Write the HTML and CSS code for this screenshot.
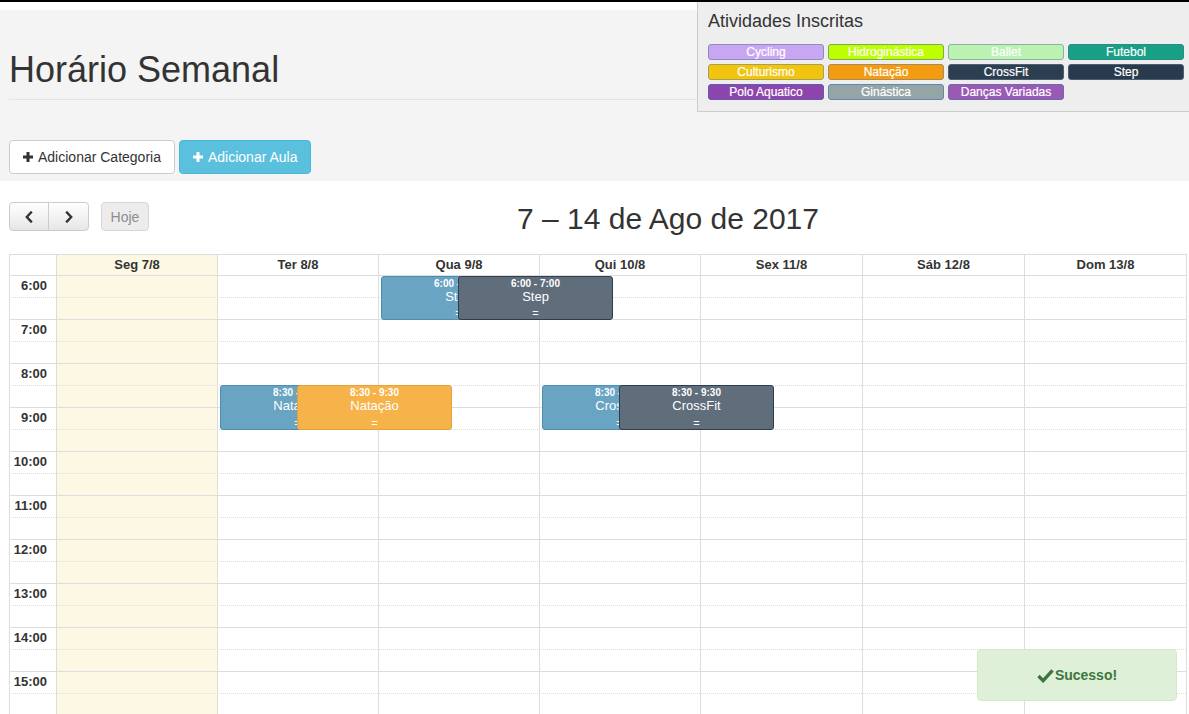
FILE: index.html
```html
<!DOCTYPE html>
<html lang="pt">
<head>
<meta charset="utf-8">
<title>Horário Semanal</title>
<link rel="stylesheet" href="styles.css">
</head>
<body>
<header class="hero">
  <div class="page-header"><h1>Horário Semanal</h1></div>
  <div class="actions">
    <button class="btn btn-default"><svg class="plus" viewBox="0 0 10 10"><rect x="3.5" y="0" width="3" height="10"/><rect x="0" y="3.5" width="10" height="3"/></svg> Adicionar Categoria</button>
    <button class="btn btn-info"><svg class="plus" viewBox="0 0 10 10"><rect x="3.5" y="0" width="3" height="10"/><rect x="0" y="3.5" width="10" height="3"/></svg> Adicionar Aula</button>
  </div>
</header>

<aside class="activities">
  <h4 class="act-title">Atividades Inscritas</h4>
  <div class="labels">
    <span class="lbl c-cycling">Cycling</span>
    <span class="lbl c-hidro">Hidroginástica</span>
    <span class="lbl c-ballet">Ballet</span>
    <span class="lbl c-futebol">Futebol</span>
    <span class="lbl c-cult">Culturismo</span>
    <span class="lbl c-natacao">Natação</span>
    <span class="lbl c-crossfit">CrossFit</span>
    <span class="lbl c-step">Step</span>
    <span class="lbl c-polo">Polo Aquatico</span>
    <span class="lbl c-ginastica">Ginástica</span>
    <span class="lbl c-dancas">Danças Variadas</span>
  </div>
</aside>

<section class="calendar">
  <div class="toolbar">
    <div class="tb-left">
      <div class="btn-group">
        <button class="fc-btn first"><svg class="chev" viewBox="0 0 8 12"><polyline points="6,1.5 1.8,6 6,10.5"/></svg></button>
        <button class="fc-btn last"><svg class="chev" viewBox="0 0 8 12"><polyline points="2,1.5 6.2,6 2,10.5"/></svg></button>
      </div>
      <button class="fc-btn today" disabled>Hoje</button>
    </div>
    <h2 class="tb-title">7 – 14 de Ago de 2017</h2>
  </div>

  <div class="fc-head">
    <div class="hcell axis"></div>
    <div class="hcell today-col">Seg 7/8</div>
    <div class="hcell">Ter 8/8</div>
    <div class="hcell">Qua 9/8</div>
    <div class="hcell">Qui 10/8</div>
    <div class="hcell">Sex 11/8</div>
    <div class="hcell">Sáb 12/8</div>
    <div class="hcell">Dom 13/8</div>
  </div>

  <div class="fc-body">
    <div class="layer bg">
      <div class="bg-col"></div>
      <div class="bg-col today-col"></div>
      <div class="bg-col"></div>
      <div class="bg-col"></div>
      <div class="bg-col"></div>
      <div class="bg-col"></div>
      <div class="bg-col"></div>
      <div class="bg-col"></div>
    </div>
    <div class="layer slats">
      <div class="slat minor"><span class="time">6:00</span></div><div class="slat"></div>
      <div class="slat minor"><span class="time">7:00</span></div><div class="slat"></div>
      <div class="slat minor"><span class="time">8:00</span></div><div class="slat"></div>
      <div class="slat minor"><span class="time">9:00</span></div><div class="slat"></div>
      <div class="slat minor"><span class="time">10:00</span></div><div class="slat"></div>
      <div class="slat minor"><span class="time">11:00</span></div><div class="slat"></div>
      <div class="slat minor"><span class="time">12:00</span></div><div class="slat"></div>
      <div class="slat minor"><span class="time">13:00</span></div><div class="slat"></div>
      <div class="slat minor"><span class="time">14:00</span></div><div class="slat"></div>
      <div class="slat minor"><span class="time">15:00</span></div><div class="slat"></div>
    </div>
    <div class="layer events">
      <div class="ev ev-blue d-wed r-6">
        <span class="ev-time">6:00 - 7:00</span><span class="ev-title">Step</span><span class="ev-resize">=</span>
      </div>
      <div class="ev ev-dark d-wed r-6 second">
        <span class="ev-time">6:00 - 7:00</span><span class="ev-title">Step</span><span class="ev-resize">=</span>
      </div>
      <div class="ev ev-blue d-tue r-830">
        <span class="ev-time">8:30 - 9:30</span><span class="ev-title">Natação</span><span class="ev-resize">=</span>
      </div>
      <div class="ev ev-orange d-tue r-830 second">
        <span class="ev-time">8:30 - 9:30</span><span class="ev-title">Natação</span><span class="ev-resize">=</span>
      </div>
      <div class="ev ev-blue d-thu r-830">
        <span class="ev-time">8:30 - 9:30</span><span class="ev-title">CrossFit</span><span class="ev-resize">=</span>
      </div>
      <div class="ev ev-dark d-thu r-830 second">
        <span class="ev-time">8:30 - 9:30</span><span class="ev-title">CrossFit</span><span class="ev-resize">=</span>
      </div>
    </div>
  </div>
</section>

<div class="toast">
  <svg class="check" viewBox="0 0 18 16"><path d="M1.5 8.5 L6.5 13.5 L16.5 2.5"/></svg>
  <span>Sucesso!</span>
</div>
</body>
</html>
```

FILE: styles.css
```css
* { box-sizing: border-box; }

body {
  margin: 0;
  border-top: 2px solid #000;
  background: #fff;
  color: #333;
  font-family: "Liberation Sans", Arial, Helvetica, sans-serif;
  font-size: 14px;
  line-height: 20px;
}

/* ---------- header band ---------- */
.hero {
  margin-top: 8px;
  background: #f4f4f4;
  padding: 0 2px 7px 9px;
}
.page-header {
  padding: 40px 0 9px;
  border-bottom: 1px solid #e4e4e4;
  margin-bottom: 40px;
}
.page-header h1 {
  margin: 0;
  font-size: 36px;
  line-height: 40px;
  font-weight: normal;
  color: #333;
}
.actions {
  display: flex;
  gap: 4px;
}
.btn {
  height: 34px;
  padding: 6px 13px;
  font-family: inherit;
  font-size: 14px;
  line-height: 20px;
  border: 1px solid #ccc;
  border-radius: 4px;
  display: inline-flex;
  align-items: center;
  gap: 5px;
}
.btn-default { background: #fff; color: #333; }
.btn-info { background: #5bc0de; border-color: #46b8da; color: #fff; }
.plus { width: 10px; height: 10px; fill: currentColor; margin-top: -1px; }

/* ---------- activities panel (floating widget) ---------- */
.activities {
  position: absolute;
  top: 2px;
  right: 0;
  width: 492px;
  background: #eee;
  border-left: 1px solid #ccc;
  border-bottom: 1px solid #ccc;
  padding: 9px 5px 11px 10px;
}
.act-title {
  margin: 0 0 13px;
  font-size: 18px;
  line-height: 20px;
  font-weight: normal;
  color: #333;
}
.labels {
  display: grid;
  grid-template-columns: repeat(4, 116px);
  grid-auto-rows: 16px;
  gap: 4px;
}
.lbl {
  display: block;
  height: 16px;
  border: 1px solid #5d7591;
  border-radius: 3px;
  color: #fff;
  font-size: 12px;
  line-height: 14px;
  text-align: center;
  white-space: nowrap;
  overflow: hidden;
  -webkit-text-stroke: 0.2px #fff;
}
.c-cycling   { background: #c9a6f2; border-color: #8b8dc2; }
.c-hidro     { background: #bdff00; border-color: #7ea85a; }
.c-ballet    { background: #bbf2b1; border-color: #86b5a2; }
.c-futebol   { background: #17a086; border-color: #2e8a87; }
.c-cult      { background: #f1c40f; border-color: #a7a053; }
.c-natacao   { background: #f39c12; border-color: #a98a5c; }
.c-crossfit  { background: #2c3e50; border-color: #4b6078; }
.c-step      { background: #283a4c; border-color: #4b6078; }
.c-polo      { background: #8e44ad; border-color: #5c5ca8; }
.c-ginastica { background: #95a5a6; border-color: #5f89a5; }
.c-dancas    { background: #9b59b6; border-color: #6a6cb0; }

/* ---------- calendar ---------- */
.calendar {
  padding: 21px 2px 0 9px;
}
.toolbar {
  display: flex;
  align-items: flex-start;
  height: 33px;
  margin-bottom: 19px;
}
.tb-left {
  display: flex;
  gap: 12px;
}
.btn-group { display: flex; }
.fc-btn {
  height: 29px;
  padding: 0 12px;
  font-family: inherit;
  font-size: 14px;
  color: #333;
  border: 1px solid #ccc;
  background: linear-gradient(#ffffff, #e6e6e6);
  display: inline-flex;
  align-items: center;
  justify-content: center;
}
.fc-btn.first { width: 40px; border-radius: 4px 0 0 4px; }
.fc-btn.last { width: 41px; border-radius: 0 4px 4px 0; margin-left: -1px; }
.fc-btn.today {
  width: 48px;
  padding: 0;
  border-radius: 4px;
  background: #ececec;
  border-color: #d6d6d6;
  color: #8c8c8c;
}
.chev {
  width: 8px;
  height: 12px;
  fill: none;
  stroke: #333;
  stroke-width: 2.4;
  stroke-linecap: square;
}
.tb-title {
  flex: 1;
  margin: 0;
  font-size: 30px;
  line-height: 33px;
  font-weight: normal;
  text-align: center;
  color: #333;
}

.fc-head,
.bg,
.events {
  display: grid;
  grid-template-columns: 47px repeat(4, 161px) repeat(3, 1fr);
}
.fc-head {
  border-right: 1px solid #ddd;
}
.hcell {
  height: 22px;
  border-left: 1px solid #ddd;
  border-top: 1px solid #ddd;
  border-bottom: 1px solid #ddd;
  font-size: 13px;
  font-weight: bold;
  line-height: 20px;
  text-align: center;
}
.today-col { background: #fcf8e3; }

.fc-body {
  display: grid;
  border-right: 1px solid #ddd;
}
.layer { grid-area: 1 / 1; }
.bg-col { border-left: 1px solid #ddd; }

.slat {
  height: 22px;
  border-bottom: 1px solid #ddd;
  width: 100%;
}
.slat.minor { border-bottom-style: dotted; }
.time {
  display: block;
  width: 47px;
  padding-right: 9px;
  text-align: right;
  font-size: 13px;
  font-weight: bold;
  line-height: 20px;
  color: #333;
}

.events {
  grid-template-rows: repeat(20, 22px);
}
.ev {
  grid-column-end: span 2;
  justify-self: start;
  width: 155px;
  margin-left: 3px;
  border: 1px solid;
  border-radius: 3px;
  color: #fff;
  display: flex;
  flex-direction: column;
  align-items: center;
  overflow: hidden;
  white-space: nowrap;
}
.ev.second { margin-left: 80px; }
.d-tue { grid-column-start: 3; }
.d-wed { grid-column-start: 4; }
.d-thu { grid-column-start: 5; }
.r-6 { grid-row: 1 / 3; }
.r-830 { grid-row: 6 / 8; margin-top: -1px; }

.ev-blue   { background: #69a4c3; border-color: #4c8db2; }
.ev-dark   { background: #606d7b; border-color: #2f3e4e; }
.ev-orange { background: #f5b34a; border-color: #e5a23a; }

.ev-time {
  font-size: 10px;
  font-weight: bold;
  line-height: 12px;
  padding-top: 1px;
}
.ev-title {
  font-size: 13px;
  line-height: 14px;
}
.ev-resize {
  margin-top: auto;
  font-size: 11px;
  line-height: 11px;
}

/* ---------- toast (overlay) ---------- */
.toast {
  position: fixed;
  right: 12px;
  bottom: 13px;
  width: 200px;
  height: 52px;
  background: #dff0d8;
  border: 1px solid #d6e9c6;
  border-radius: 4px;
  color: #3c763d;
  font-size: 14px;
  font-weight: bold;
  display: flex;
  align-items: center;
  justify-content: center;
  gap: 1px;
}
.check {
  width: 17px;
  height: 15px;
  fill: none;
  stroke: #3c763d;
  stroke-width: 3.6;
}
```
